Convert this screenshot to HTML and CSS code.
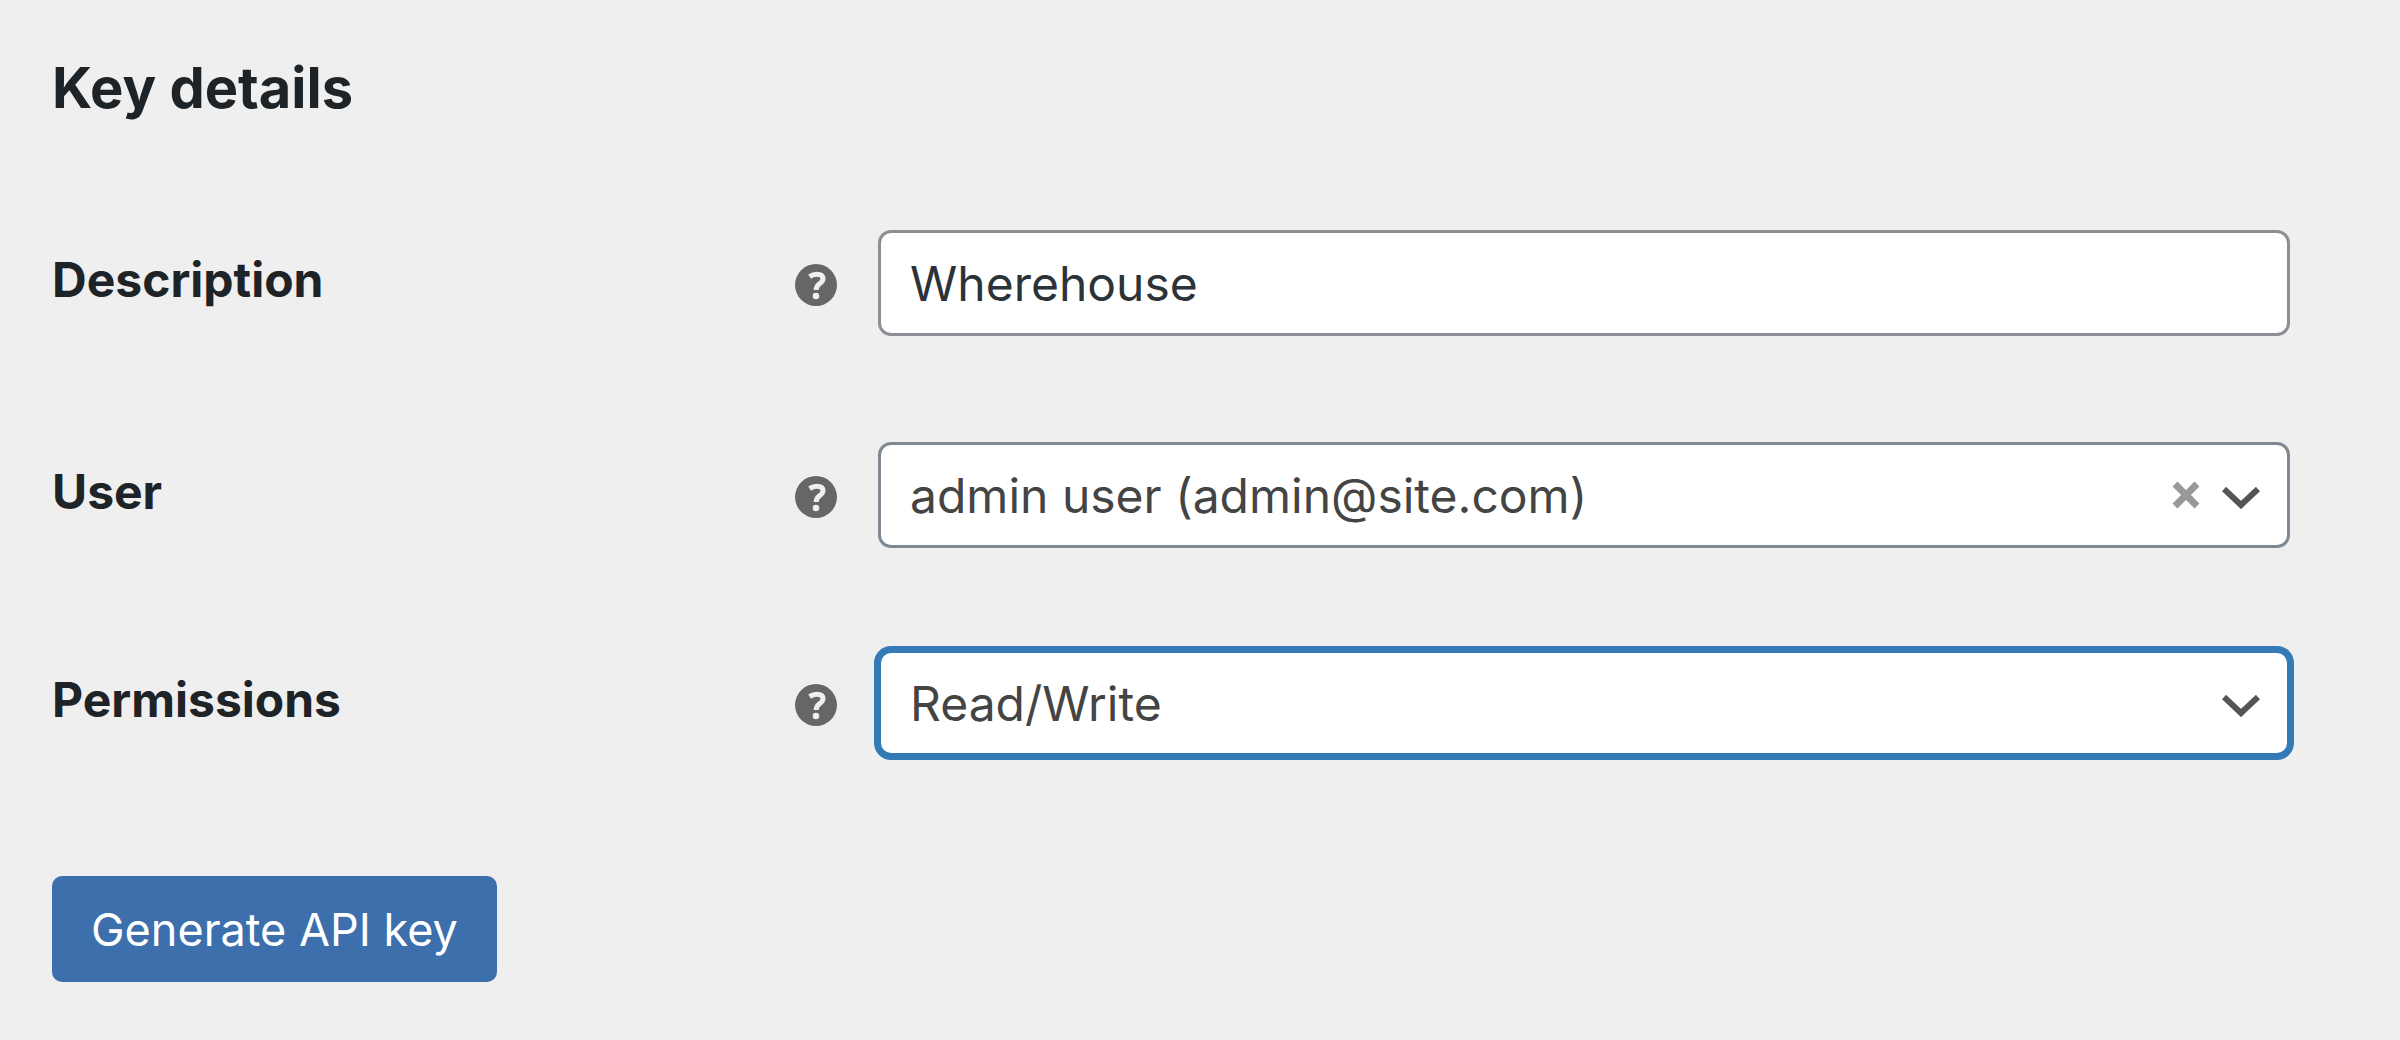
FILE: index.html
```html
<!DOCTYPE html>
<html lang="en">
<head>
    <meta charset="UTF-8">
    <meta name="viewport" content="width=device-width, initial-scale=1.0">
    <title>Key details</title>
    <link rel="stylesheet" href="styles.css">
</head>

<body>
    <svg class="sprite" aria-hidden="true">
        <symbol id="help" viewBox="0 0 42 42">
            <circle cx="21" cy="21" r="21" fill="#666"/>
            <path d="M14.6 12.6C17 10.9 19.2 10.2 21.8 10.2C25.8 10.2 28 11.9 28 14.8C28 17.4 26.3 18.6 24.3 20C22 21.6 21.2 22.6 21.2 26" fill="none" stroke="#efefef" stroke-width="5"/>
            <circle cx="21" cy="32" r="3.3" fill="#efefef"/>
        </symbol>
        <symbol id="chevron" viewBox="0 0 38 22">
            <path d="M2 2L19 18L36 2" fill="none" stroke="#555" stroke-width="6"/>
        </symbol>
    </svg>

    <form class="key-form">
        <h2>Key details</h2>

        <div class="row row-text">
            <label for="description">Description</label>
            <svg class="help"><use href="#help"/></svg>
            <input type="text" id="description" class="field" value="Wherehouse">
        </div>

        <div class="row">
            <label for="user">User</label>
            <svg class="help"><use href="#help"/></svg>
            <div class="select-wrap">
                <select id="user" class="field">
                    <option>admin user (admin@site.com)</option>
                </select>
                <button type="button" class="clear" aria-label="Clear">
                    <svg viewBox="0 0 28 28"><path d="M3 3L25 25M25 3L3 25" stroke="#999" stroke-width="7"/></svg>
                </button>
                <svg class="chevron"><use href="#chevron"/></svg>
            </div>
        </div>

        <div class="row">
            <label for="permissions">Permissions</label>
            <svg class="help"><use href="#help"/></svg>
            <div class="select-wrap">
                <select id="permissions" class="field active">
                    <option>Read</option>
                    <option>Write</option>
                    <option selected>Read/Write</option>
                </select>
                <svg class="chevron"><use href="#chevron"/></svg>
            </div>
        </div>

        <button type="submit" class="submit">Generate API key</button>
    </form>
</body>
</html>
```

FILE: styles.css
```css
* {
    margin: 0;
    padding: 0;
    box-sizing: border-box;
}

body {
    background-color: #efefef;
    color: #1d2327;
    font-family: Inter, "Liberation Sans", sans-serif;
    font-size: 48px;
}

.sprite {
    position: absolute;
    width: 0;
    height: 0;
}

.key-form {
    padding: 52px 110px 58px 52px;
}

h2 {
    font-size: 56px;
    font-weight: 700;
    line-height: 72px;
    margin-bottom: 106px;
}

.row {
    display: grid;
    grid-template-columns: 743px 42px 1fr;
    align-items: center;
    margin-bottom: 102px;
}

.row-text {
    margin-bottom: 106px;
}

label {
    font-weight: 700;
    line-height: 60px;
    padding-bottom: 6px;
}

.help {
    width: 42px;
    height: 46px;
    padding-top: 4px;
}

.field {
    display: block;
    width: 100%;
    height: 106px;
    padding: 0 29px;
    border: 3px solid #8c8f94;
    border-radius: 13px;
    background-color: #fff;
    color: #2c3338;
    font: inherit;
    outline: none;
}

input.field {
    width: auto;
    margin-left: 41px;
}

.select-wrap {
    position: relative;
    margin-left: 41px;
}

select.field {
    appearance: none;
    border-color: #7e8993;
    color: #444;
}

select.field.active {
    border-color: #337ab7;
    box-shadow: 0 0 0 4px #337ab7;
}

.chevron {
    position: absolute;
    right: 30px;
    top: 45px;
    width: 38px;
    height: 22px;
    pointer-events: none;
}

.clear {
    position: absolute;
    right: 90px;
    top: 39px;
    width: 28px;
    height: 28px;
    border: none;
    background: none;
    cursor: pointer;
}

.clear svg {
    display: block;
}

.submit {
    height: 106px;
    margin-top: 18px;
    padding: 0 39px;
    border: none;
    border-radius: 10px;
    background-color: #3c6fac;
    color: #fff;
    font-family: inherit;
    font-size: 45px;
    cursor: pointer;
}
```
